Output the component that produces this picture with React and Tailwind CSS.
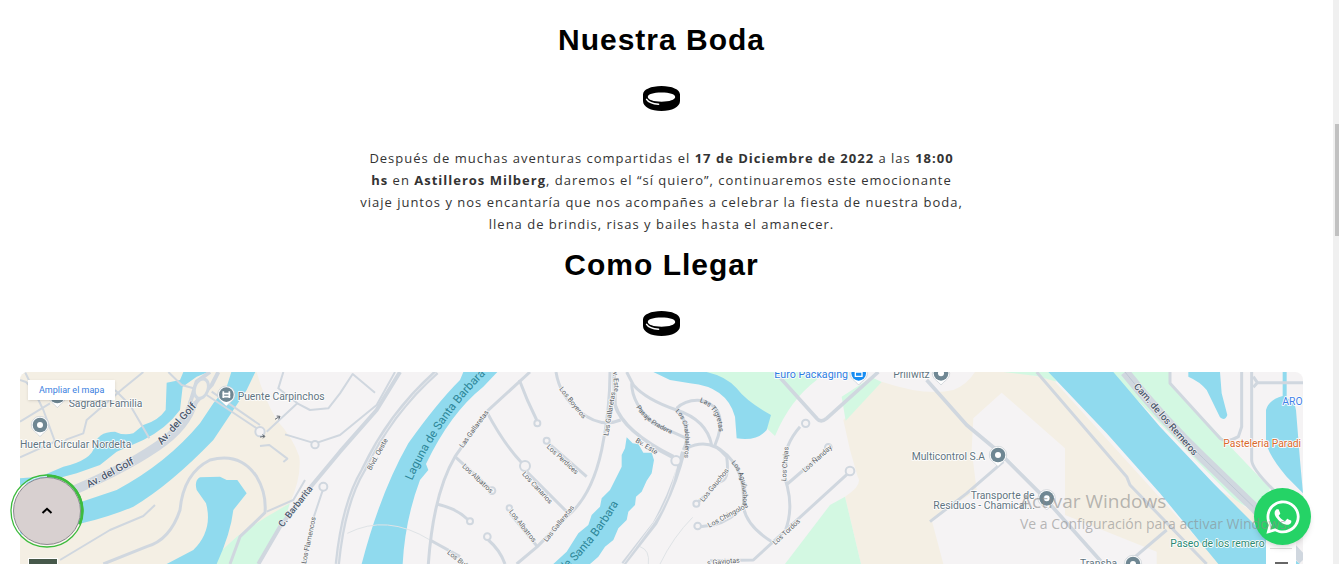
import React from 'react';
import { FaWhatsapp } from 'react-icons/fa';

function Ring() {
  return (
    <svg viewBox="0 0 38 25" className="mx-auto h-[25px] w-[38px]" aria-hidden="true">
      <path
        fillRule="evenodd"
        d="M18.500 0C8 0 0 3.500 0 8.500v6.500c0 6 8 10 18.500 10s18.500-4 18.500-10V8.500C37 3.500 29 0 18.500 0ZM18.500 6.600c8 0 13.700 1.700 13.700 4.400s-5.700 4.700-13.700 4.700S4.800 13.700 4.800 11s5.700-4.400 13.700-4.400Z"
      />
      <path d="M3.600 13.300c1.800 2.900 6 4.500 12 4.900" fill="none" stroke="#fff" strokeWidth="1.500" strokeLinecap="round" />
    </svg>
  );
}

function SectionTitle({ children }) {
  return (
    <>
      <h2 className="mb-7 text-center font-['Liberation_Sans',sans-serif] text-[30px] leading-9 font-bold tracking-[1px] text-black">
        {children}
      </h2>
      <Ring />
    </>
  );
}

const minorRoads = [
  'M60 60 L78 66 L110 100',
  'M75 36 L130 150 L165 245 L60 292',
  'M60 185 L150 130',
  'M430 36 L370 85 L260 180 L250 220 L200 238 L185 255',
  'M345 90 L390 135 L448 235',
  'M505 36 L545 75 L600 90',
  'M620 105 L770 205 M635 95 L780 195',
  'M850 36 L835 85 L892 130 L800 215',
  'M892 130 L930 150 L985 145 L1020 100 L1058 42 L1125 98',
  'M855 223 L945 250 L1020 225 L1130 135 L1185 36',
  'M780 258 L808 255 L862 296 L850 306',
  'M465 435 L430 468 L330 510 L180 600',
  'M915 360 L880 420 L800 455',
  'M970 385 L935 490 L910 612',
];

const roads = [
  'M310 612 L440 560 Q510 540 540 450 Q550 340 630 300 Q720 275 770 350 Q800 400 795 458 L720 530 L690 612',
  'M1590 36 L1460 155 L1365 290 Q1300 400 1285 612',
  'M1558 60 Q1580 120 1610 180',
  'M1460 155 Q1510 250 1565 308 M1580 335 L1700 455',
  'M1365 290 L1470 385',
  'M1310 432 Q1370 445 1405 480',
  'M1290 540 L1380 590',
  'M1465 540 Q1500 570 1515 612',
  'M1530 460 L1612 560',
  'M1640 245 L1760 350',
  'M1830 36 Q1830 150 1805 270 Q1775 410 1700 470 L1612 560 L1550 612',
  'M1668 36 Q1680 110 1740 155 Q1800 205 1862 180',
  'M1895 70 Q1895 130 1960 190 L2060 235',
  'M1880 36 L1900 75 Q1940 120 2030 150 Q2120 180 2135 255',
  'M2030 145 Q2060 115 2110 122 Q2190 150 2145 255',
  'M2040 155 Q2075 220 2050 270',
  'M2060 265 Q2130 230 2180 290 Q2190 360 2160 365 L2090 430',
  'M2140 255 Q2240 310 2230 440 Q2240 500 2320 548',
  'M2100 500 L2140 495 Q2200 480 2230 435',
  'M2400 200 Q2330 280 2362 380 Q2380 450 2355 515',
  'M2362 372 L2480 270',
  'M2550 335 L2380 490 L2260 600 L2130 602',
  'M2790 485 L2900 400 L3010 305',
  'M3510 36 L3510 70 L3660 235 Q3680 250 3715 230 L3725 200 L3725 36',
  'M3755 36 L3755 300 Q3755 335 3880 445',
  'M3760 50 L3772 68 L3910 68 M3772 68 L3760 82',
  'M3110 36 L3380 350 L3390 375 L3620 612',
  'M3380 612 L3500 510',
];

const loops = [
  [970, 380, 12], [945, 254, 11], [780, 215, 14], [1575, 318, 15], [1612, 190, 9],
  [1476, 392, 10], [1410, 484, 9], [1462, 530, 10], [2089, 431, 9], [2093, 498, 10],
  [2417, 190, 11], [2485, 262, 10], [2550, 333, 13], [2028, 302, 14], [1640, 242, 9], [1528, 444, 8],
];

const labels = [
  ['Los Boyeros', 1677, 88, 51, 21], ['Los Perdices', 1639, 262, 43, 21],
  ['Los Canarios', 1565, 343, 47, 21], ['Los Albatros', 1385, 320, 43, 21],
  ['Los Albatros', 1526, 455, 52, 21], ['Las Gallaretas', 1388, 265, -54, 21],
  ['Las Gallaretas', 1640, 547, -51, 21], ['Las Gallaretas', 1825, 228, -81, 21],
  ['Bv. Este', 1838, 22, 86, 21], ['Bv. Este', 1905, 245, 32, 21],
  ['Blvd. Oeste', 1113, 332, -61, 21], ['Los Bulbules', 1340, 580, 38, 21],
  ['Los Flamencos', 918, 612, -78, 21], ['Los Gauchos', 2110, 427, -51, 21],
  ['Los Chingolos', 2128, 503, -28, 21], ['Los Chajas', 2358, 364, -86, 21],
  ['Los Ñanday', 2415, 338, -42, 21], ['Los Tordos', 2326, 556, -43, 21],
  ['s Gaviotas', 2122, 616, -5, 21],
];

const curvedLabels = [
  ['laguna-norte', 'M1236 362 Q1325 165 1475 25 L1520 -20', 'Laguna de Santa Barbara', 'text-[35px] fill-[#2d8799]'],
  ['laguna-sur', 'M1668 655 Q1790 560 1880 385', 'a de Santa Barbara', 'text-[35px] fill-[#2d8799]'],
  ['pradera', 'M1908 142 Q1940 195 2030 228', 'Pasaje Pradera', 'text-[20px] fill-[#5a5f66]'],
  ['chalchaleros', 'M2026 155 Q2070 195 2050 310', 'Los Chalchaleros', 'text-[19px] fill-[#5a5f66]'],
  ['tigretes', 'M2098 126 Q2158 142 2158 235', 'Las Tigretas', 'text-[21px] fill-[#5a5f66]'],
  ['aguiluchos', 'M2194 308 Q2240 360 2226 460', 'Los Aguiluchos', 'text-[20px] fill-[#5a5f66]'],
];

function Pin({ x, y, color = '#6f8793', children }) {
  return (
    <g transform={`translate(${x} ${y})`}>
      <path d="M-26 0a26 26 0 1 1 52 0c0 17-15 21-26 35c-11-14-26-18-26-35Z" fill="#fff" stroke="#c3cad0" strokeWidth="2" />
      <circle r="22" fill={color} />
      {children || <circle r="9" fill="#fff" />}
    </g>
  );
}

function MapDrawing() {
  return (
    <svg
      viewBox="60 36 3849 576"
      preserveAspectRatio="xMidYMin slice"
      role="img"
      aria-label="Mapa"
      className="block h-full w-full bg-[#f5f3f4] font-[Roboto,sans-serif]"
    >
      {/* land */}
      <path fill="#f4efe4" d="M60 36 H770 Q790 110 830 180 Q880 235 898 290 Q905 350 870 430 L710 530 L620 612 H60Z" />
      <path fill="#f4efe4" d="M2645 65 Q2780 110 2860 90 Q2900 75 2925 36 H3050 L3160 60 L3660 612 H3470 V575 L3195 465 V265 L3005 98 L2920 175 L2915 270 L2930 390 L2795 480 L2830 612 H2583 L2535 410 Q2590 375 2573 350 L2550 270 L2530 180Z" />
      <path fill="#d3f8e2" d="M870 430 L800 470 L710 530 L620 612 H775 L850 490Z" />
      <path fill="#d3f8e2" d="M2120 36 H2465 L2450 60 Q2370 120 2325 228 L2290 195Z" />
      <path fill="#d3f8e2" d="M2525 110 L2615 52 L2645 66 L2537 182Z" />
      <path fill="#d3f8e2" d="M2535 410 L2490 435 L2355 612 H2583Z" />
      <path fill="#d3f8e2" d="M3010 36 H3150 L3170 65 L3110 48Z" />
      <path fill="#d3f8e2" d="M3330 36 H3510 V70 L3810 385 L3780 460 L3710 425Z" />
      <path fill="#f4efe4" d="M3640 380 L3700 415 L3790 480 L3800 535Z" />

      {/* water */}
      <g fill="#90daee">
        <path d="M550 36 L540 60 L500 68 L497 150 Q475 182 430 195 L400 220 Q370 228 345 215 Q290 215 283 260 Q275 300 190 320 L120 350 L60 355 V375 L130 367 L230 340 L300 315 L350 275 L430 240 Q500 205 540 150 L548 80 L590 50 L625 36Z" />
        <path d="M694 36 L680 80 L640 130 L600 190 Q500 310 350 390 L245 425 L60 460 V525 L245 490 Q330 470 400 440 Q510 375 640 240 L700 150 L740 90 L766 36Z" />
        <path d="M600 352 L660 350 L680 360 L712 360 L740 400 L700 450 Q692 520 650 612 H500 L580 570 Q640 510 618 430 L590 390 Q582 362 600 352Z" />
        <path d="M1390 36 L1380 60 Q1310 130 1225 250 Q1140 400 1085 612 H1208 Q1215 480 1260 360 L1285 330 L1278 312 Q1350 160 1450 80 L1492 36Z" />
        <path d="M1880 232 L1898 250 L1915 252 L1930 278 L1955 278 L1962 300 L1955 340 L1940 362 L1925 395 L1908 410 L1905 435 L1885 455 L1880 480 L1855 505 L1840 540 L1815 560 L1795 590 L1770 612 H1660 L1700 575 L1735 520 L1765 495 L1775 465 L1800 440 L1805 415 L1830 390 L1850 350 L1865 320 L1865 285 L1875 265Z" />
        <path d="M1960 36 L2010 60 L2070 70 Q2180 80 2205 170 L2210 235 Q2270 245 2300 210 L2313 165 Q2240 125 2210 85 Q2180 50 2120 36Z" />
        <path d="M3145 36 L3320 220 L3480 400 L3655 612 H3900 L3780 510 L3640 370 L3480 200 L3340 36Z" />
        <path d="M3565 36 H3660 L3665 100 L3682 165 Q3675 185 3660 172 L3620 90 Q3600 65 3565 50Z" />
        <path d="M3848 36 H3860 V115 Q3885 120 3888 150 L3900 300 L3909 400 L3860 350 Q3800 280 3798 240 V150 Q3805 120 3848 108Z" />
      </g>

      {/* roads */}
      <g fill="none" stroke="#d0d7df" strokeLinejoin="round">
        <path strokeWidth="3" stroke="#dfe3e6" d="M1042 520 Q1160 460 1290 540 M1920 560 Q1950 570 1945 612 M1980 612 Q2020 530 2078 472" />
        <g strokeWidth="6">{minorRoads.map((d) => <path key={d} d={d} />)}</g>
        <g strokeWidth="9">{roads.map((d) => <path key={d} d={d} />)}</g>
        <path strokeWidth="12" d="M775 612 L840 500 L920 395 L1020 275 L1130 150 L1200 36" />
        <path strokeWidth="11" d="M2325 36 L2450 175 Q2462 190 2480 175 L2635 36" />
        <path strokeWidth="11" d="M2780 60 L2900 195 L2990 270 L3130 410 L3310 612" />
        <path strokeWidth="16" d="M1310 36 Q1170 160 1090 330 Q1030 430 1012 612" />
        <path strokeWidth="2" stroke="#f5f3f4" d="M1310 36 Q1170 160 1090 330 Q1030 430 1012 612" />
        <path strokeWidth="11" d="M1842 36 L1845 135 Q1870 215 2020 290 M1940 250 L2025 295" />
        <path strokeWidth="14" d="M2050 275 Q2025 380 1965 490 L1870 612" />
        <path strokeWidth="2" stroke="#f5f3f4" d="M2030 320 Q2010 420 1960 490 L1870 612" />
        <path strokeWidth="28" d="M180 408 Q360 335 470 260 Q560 200 580 125" />
        <path strokeWidth="12" d="M570 130 L590 65 L630 36 M585 130 L635 75 L655 36" />
        <path strokeWidth="30" d="M3375 36 Q3480 170 3610 295 L3760 440 L3909 600" />
        <path strokeWidth="3" stroke="#bdc7d3" d="M3375 36 Q3480 170 3610 295 L3760 440" />
      </g>
      <ellipse cx="604" cy="86" rx="20" ry="30" transform="rotate(20 604 86)" fill="#f4efe4" stroke="#d1d9e1" strokeWidth="9" />
      <g fill="#f5f3f4" stroke="#d0d7df" strokeWidth="6">
        {loops.map(([x, y, r], i) => <circle key={i} cx={x} cy={y} r={r} />)}
      </g>
      <path d="M825 178 L838 170 M830 168 L840 169 L836 178 M780 231 L794 229 M787 224 L795 229 L789 235" fill="none" stroke="#646b73" strokeWidth="3" />

      {/* street names */}
      <g fill="#5a5f66" stroke="#f8f7f7" strokeWidth="5" strokeLinejoin="round" style={{ paintOrder: 'stroke' }}>
        {labels.map(([name, x, y, angle, size], i) => (
          <text key={i} fontSize={size} transform={`translate(${x} ${y}) rotate(${angle})`}>{name}</text>
        ))}
      </g>
      {curvedLabels.map(([id, d, name, style]) => (
        <g key={id}>
          <path id={id} d={d} fill="none" />
          <text className={style}><textPath href={`#${id}`}>{name}</textPath></text>
        </g>
      ))}
      <g fill="#4d5a6e" fontSize="31" fontWeight="500" stroke="#f3f3f3" strokeWidth="4" style={{ paintOrder: 'stroke' }}>
        <text transform="translate(266 384) rotate(-28)">Av. del Golf</text>
        <text transform="translate(485 256) rotate(-48)">Av. del Golf</text>
        <text transform="translate(848 503) rotate(-52)" fontSize="28">C. Barbarita</text>
        <text transform="translate(3400 80) rotate(49)" fontSize="29">Cam. de los Remeros</text>
      </g>

      {/* places */}
      <Pin x={172} y={108} />
      <Pin x={120} y={195} />
      <Pin x={679} y={104}>
        <path d="M-9 10V-10M9 10V-10M-12-3H12M-12 6H12" fill="none" stroke="#fff" strokeWidth="5" />
      </Pin>
      <Pin x={2576} y={40} color="#188df2">
        <path d="M-10-4H10V9H-10ZM-5-4V-10H5V-4" fill="none" stroke="#fff" strokeWidth="4" />
      </Pin>
      <Pin x={2823} y={40} />
      <Pin x={2994} y={285} />
      <Pin x={3140} y={415} />
      <Pin x={3399} y={612} />
      <g fill="#5f7480" fontSize="31" stroke="#fff" strokeWidth="5" strokeLinejoin="round" style={{ paintOrder: 'stroke' }}>
        <text x="206" y="140">Sagrada Familia</text>
        <text x="60" y="265">Huerta Circular Nordelta</text>
        <text x="713" y="120">Puente Carpinchos</text>
        <text x="2323" y="55" fill="#2f7de1" fontSize="32">Euro Packaging</text>
        <text x="2680" y="55">Prillwitz</text>
        <text x="2735" y="301">Multicontrol S.A</text>
        <text x="2912" y="416">Transporte de</text>
        <text x="2800" y="447">Residuos - Chamical...</text>
        <text x="3240" y="622">Transba</text>
        <text x="3847" y="135" fill="#3f7fe8">ARO</text>
        <text x="3670" y="260" fill="#d9692c">Pasteleria Paradi</text>
        <text x="3511" y="561" fill="#2b8a73">Paseo de los remero</text>
      </g>
    </svg>
  );
}

export default function App() {
  return (
    <div className="relative flex h-screen overflow-hidden bg-white font-['Open_Sans','Noto_Sans',sans-serif]">
      <main className="flex min-w-0 flex-1 flex-col pt-[22px] pr-[30px] pl-5">
        <section>
          <SectionTitle>Nuestra Boda</SectionTitle>
          <p className="mx-auto mt-9 max-w-[612px] text-center text-[13px] leading-[22px] tracking-[1px] text-[#333]">
            Después de muchas aventuras compartidas el <strong>17 de Diciembre de 2022</strong> a las{' '}
            <strong>18:00<br />hs</strong> en <strong>Astilleros Milberg</strong>, daremos el “sí quiero”, continuaremos
            este emocionante<br />viaje juntos y nos encantaría que nos acompañes a celebrar la fiesta de nuestra boda,
            llena de brindis, risas y bailes hasta el amanecer.
          </p>
        </section>
        <section className="mt-3 flex min-h-0 flex-1 flex-col">
          <SectionTitle>Como Llegar</SectionTitle>
          <div className="relative mt-9 min-h-0 flex-1 overflow-hidden rounded-t-lg">
            <MapDrawing />
            <a
              href="#mapa"
              className="absolute top-2 left-2 bg-white px-[11px] font-[Roboto,sans-serif] text-[9px] leading-5 text-[#3a80e0] shadow-sm"
            >
              Ampliar el mapa
            </a>
            <button
              type="button"
              aria-label="Vista satelital"
              className="absolute -bottom-8 left-2 h-[38px] w-[30px] border border-white bg-[#46584a]"
            />
            <button
              type="button"
              aria-label="Alejar"
              className="absolute right-[7px] bottom-0 flex h-9 w-[30px] items-end justify-center bg-white"
            >
              <span className="absolute inset-x-1 top-5 h-px bg-[#ddd]" />
              <span className="h-0.5 w-[13px] bg-[#666]" />
            </button>
          </div>
        </section>
      </main>

      <div className="w-1.5 shrink-0 bg-[#f0f0f0] pt-[124px]" aria-hidden="true">
        <div className="ml-auto h-28 w-1 bg-[#c1c1c1]" />
      </div>

      <button type="button" aria-label="Volver arriba" className="absolute bottom-4 left-2.5 size-[74px]">
        <svg viewBox="0 0 74 74" className="size-full" fill="none">
          <circle cx="37" cy="37" r="35" stroke="#fff" strokeOpacity=".7" strokeWidth="1" />
          <circle cx="37" cy="37" r="36" stroke="#3dbb3d" strokeWidth="1.300" />
          <circle cx="37" cy="37" r="33.500" fill="#d8d0d0" stroke="#8d8a92" strokeWidth="1" />
          <path d="M37 1.800A35.200 35.200 0 0 1 69.500 50.500" stroke="#3dbb3d" strokeWidth="2.600" />
          <path d="M32.500 39L37 34.800L41.500 39" stroke="#000" strokeWidth="2" />
        </svg>
      </button>

      <a
        href="#whatsapp"
        aria-label="WhatsApp"
        className="absolute right-7 bottom-[19px] flex size-[57px] items-center justify-center rounded-full bg-[#25d366] text-white shadow-md"
      >
        <FaWhatsapp className="size-[38px]" />
      </a>

      <div className="pointer-events-none absolute right-8 bottom-[29px] w-[287px] whitespace-nowrap text-[#8a8a8a]/60">
        <p className="text-[19px] leading-6">Activar Windows</p>
        <p className="text-[14px] leading-[22px]">Ve a Configuración para activar Windows.</p>
      </div>
    </div>
  );
}
